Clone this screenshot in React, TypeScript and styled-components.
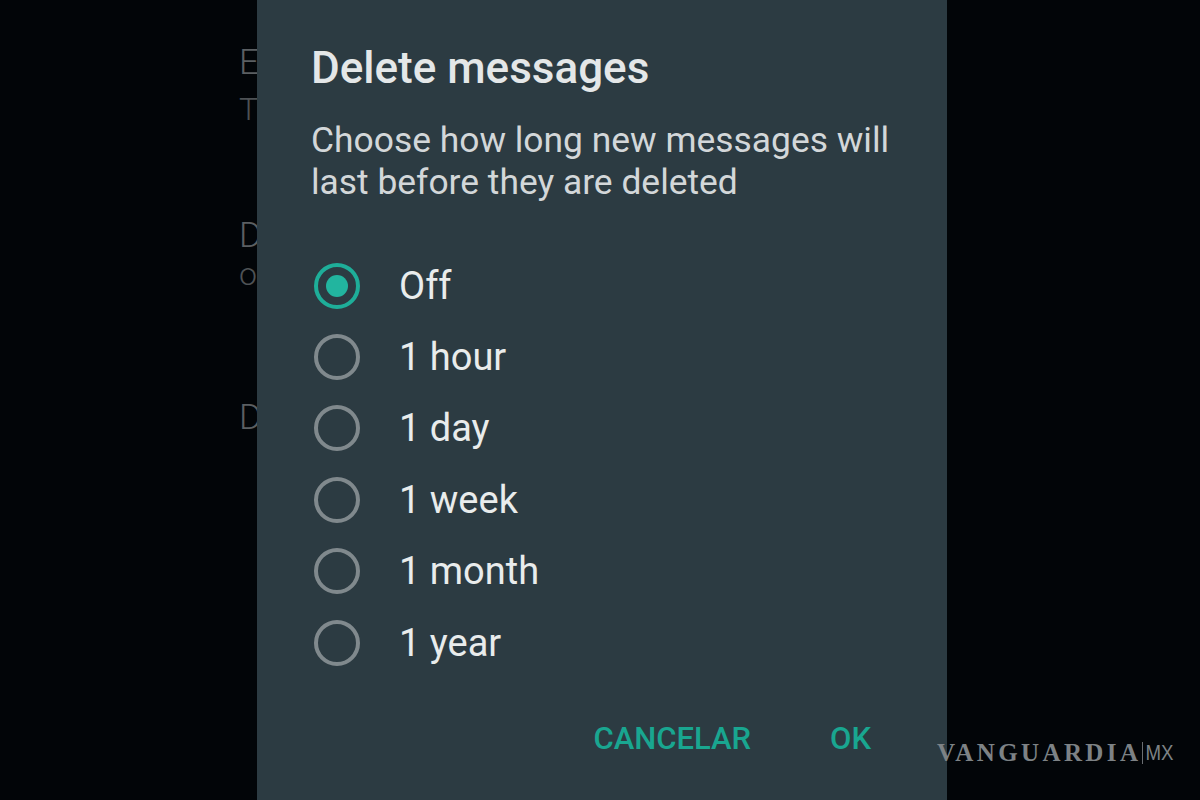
import React, { useState } from "react";
import styled, { createGlobalStyle } from "styled-components";

const Global = createGlobalStyle`
  html, body { margin: 0; padding: 0; background: #020508; }
  body { width: 1200px; height: 800px; overflow: hidden; font-family: Roboto, "Noto Sans", sans-serif; }
  #root { width: 1200px; height: 800px; }
`;

const Screen = styled.div`
  position: relative;
  width: 1200px;
  height: 800px;
  background: #020508;
  overflow: hidden;
`;

/* settings list sitting behind the dimmed overlay */
const SettingsList = styled.div`
  display: flex;
  flex-direction: column;
  padding: 43px 0 0 239px;
`;

const SettingsItem = styled.div<{ $top: number; $subGap?: number }>`
  display: flex;
  flex-direction: column;
  margin-top: ${(p) => p.$top}px;
  & > :nth-child(2) {
    margin-top: ${(p) => p.$subGap ?? 0}px;
  }
`;

const SettingsTitle = styled.div`
  font-family: Roboto, sans-serif;
  font-weight: 300;
  font-size: 35px;
  line-height: 40px;
  color: #5b5f62;
`;

const SettingsSub = styled.div`
  font-family: Roboto, sans-serif;
  font-weight: 300;
  font-size: 32px;
  line-height: 30px;
  color: #4e5255;
`;

const Dialog = styled.div`
  position: absolute;
  top: 0;
  left: 257px;
  width: 690px;
  height: 800px;
  background: #2c3b42;
  box-sizing: border-box;
  padding: 42px 0 0 54px;
  display: flex;
  flex-direction: column;
`;

const Title = styled.h2`
  margin: 0;
  font-family: Roboto, sans-serif;
  font-weight: 500;
  font-size: 44px;
  line-height: 52px;
  color: #e4e7e8;
`;

const Body = styled.p`
  margin: 25px 0 0;
  font-family: Roboto, sans-serif;
  font-weight: 400;
  font-size: 35.4px;
  line-height: 42px;
  color: #d3d7d9;
`;

const Options = styled.div`
  display: flex;
  flex-direction: column;
  margin-top: 47px;
`;

const Option = styled.label`
  display: flex;
  align-items: center;
  height: 71.4px;
  cursor: pointer;
`;

const Radio = styled.span<{ $on: boolean }>`
  position: relative;
  box-sizing: border-box;
  width: 46px;
  height: 46px;
  margin-left: 3px;
  border-radius: 50%;
  border: 4px solid ${(p) => (p.$on ? "#1eae99" : "#80898d")};
  flex: none;
  &::after {
    content: "";
    display: ${(p) => (p.$on ? "block" : "none")};
    position: absolute;
    left: 50%;
    top: 50%;
    width: 22px;
    height: 22px;
    margin: -11px 0 0 -11px;
    border-radius: 50%;
    background: #22b59f;
  }
`;

const OptionLabel = styled.span`
  margin-left: 39px;
  font-family: Roboto, sans-serif;
  font-size: 38px;
  color: #e9ecec;
`;

const Actions = styled.div`
  display: flex;
  justify-content: flex-end;
  gap: 79px;
  padding-right: 76px;
  margin-top: 43px;
`;

const ActionButton = styled.button`
  background: none;
  border: none;
  padding: 0;
  font-family: Roboto, sans-serif;
  font-weight: 500;
  font-size: 31px;
  line-height: 36px;
  color: #19a690;
  cursor: pointer;
`;

const Watermark = styled.div`
  position: absolute;
  left: 937px;
  top: 739px;
  display: flex;
  align-items: center;
  color: #7d8285;
`;

const Brand = styled.span`
  font-family: "Liberation Serif", serif;
  font-weight: 700;
  font-size: 25px;
  letter-spacing: 3.4px;
`;

const Suffix = styled.span`
  margin-left: 1px;
  padding-left: 3px;
  border-left: 1px solid #7d8285;
  font-family: "Liberation Sans", sans-serif;
  font-weight: 400;
  font-size: 22px;
  line-height: 22px;
  transform: scaleX(0.85);
  transform-origin: left;
`;

const choices = ["Off", "1 hour", "1 day", "1 week", "1 month", "1 year"];

export default function App() {
  const [value, setValue] = useState("Off");
  return (
    <Screen>
      <Global />
      <SettingsList>
        <SettingsItem $top={0} $subGap={11}>
          <SettingsTitle>E</SettingsTitle>
          <SettingsSub>T</SettingsSub>
        </SettingsItem>
        <SettingsItem $top={92} $subGap={3}>
          <SettingsTitle>D</SettingsTitle>
          <SettingsSub>o</SettingsSub>
        </SettingsItem>
        <SettingsItem $top={109}>
          <SettingsTitle>D</SettingsTitle>
        </SettingsItem>
      </SettingsList>
      <Dialog>
        <Title>Delete messages</Title>
        <Body>
          Choose how long new messages will
          <br />
          last before they are deleted
        </Body>
        <Options>
          {choices.map((c) => (
            <Option key={c} onClick={() => setValue(c)}>
              <Radio $on={value === c} />
              <OptionLabel>{c}</OptionLabel>
            </Option>
          ))}
        </Options>
        <Actions>
          <ActionButton>CANCELAR</ActionButton>
          <ActionButton>OK</ActionButton>
        </Actions>
      </Dialog>
      <Watermark>
        <Brand>VANGUARDIA</Brand>
        <Suffix>MX</Suffix>
      </Watermark>
    </Screen>
  );
}
